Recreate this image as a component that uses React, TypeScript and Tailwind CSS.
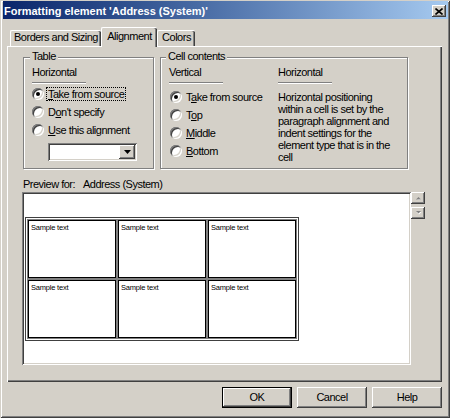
import React from "react";

const raised =
  "shadow-[inset_-1px_-1px_#404040,inset_1px_1px_#fff,inset_-2px_-2px_#808080,inset_2px_2px_#d4d0c8]";
const sunken =
  "shadow-[inset_1px_1px_#808080,inset_-1px_-1px_#fff,inset_2px_2px_#404040,inset_-2px_-2px_#d4d0c8]";

function Radio({ checked }: { checked?: boolean }) {
  return (
    <span className="relative w-[12px] h-[12px] shrink-0 rounded-full bg-white shadow-[inset_1px_1px_#808080,inset_-1px_-1px_#fff,inset_2px_2px_#404040,inset_-2px_-2px_#d4d0c8]">
      {checked && (
        <span className="absolute left-[4px] top-[4px] w-[4px] h-[4px] rounded-full bg-black" />
      )}
    </span>
  );
}

function RadioRow({
  children,
  checked,
  focus,
}: {
  children: React.ReactNode;
  checked?: boolean;
  focus?: boolean;
}) {
  return (
    <div className="flex items-center h-[18px]">
      <Radio checked={checked} />
      <span
        className={`ml-[2px] px-[1px] leading-[12px] border border-dotted whitespace-nowrap ${
          focus ? "border-black" : "border-transparent"
        }`}
      >
        {children}
      </span>
    </div>
  );
}

function Separator() {
  return <div className="w-[54px] h-[2px] mt-[3px] border-t border-t-[#808080] border-b border-b-white" />;
}

function Group({
  title,
  legendLeft,
  className,
  children,
}: {
  title: string;
  legendLeft: string;
  className: string;
  children: React.ReactNode;
}) {
  return (
    <div className={`relative border border-[#808080] shadow-[inset_1px_1px_#fff,1px_1px_#fff] ${className}`}>
      <span className={`absolute top-[-8px] px-[2px] bg-[#d4d0c8] leading-[13px] ${legendLeft}`}>{title}</span>
      {children}
    </div>
  );
}

function Tab({ label, width, active }: { label: string; width: string; active?: boolean }) {
  return (
    <div
      className={`${width} ${
        active ? "h-[20px] pt-[2px] z-10 relative" : "h-[17px]"
      } bg-[#d4d0c8] rounded-t-[2px] border-t border-l border-white shadow-[inset_-1px_0_#404040,inset_-2px_0_#808080] text-center leading-[13px] whitespace-nowrap`}
    >
      {label}
    </div>
  );
}

function Button({ label, isDefault }: { label: string; isDefault?: boolean }) {
  return (
    <div
      className={`w-[70px] h-[21px] flex items-center justify-center bg-[#d4d0c8] ${raised} ${
        isDefault ? "border border-black" : ""
      }`}
    >
      {label}
    </div>
  );
}

function ScrollBtn({ up }: { up?: boolean }) {
  return (
    <div className={`w-[14px] h-[12px] flex items-center justify-center bg-[#d4d0c8] ${raised}`}>
      <svg width="7" height="4" viewBox="0 0 7 4">
        {up ? (
          <>
            <polygon points="1,4 6,4 3.5,1.5" fill="#fff" transform="translate(0.5,0.5)" />
            <polygon points="1,3.5 6,3.5 3.5,1" fill="#808080" />
          </>
        ) : (
          <>
            <polygon points="1,0.5 6,0.5 3.5,3" fill="#fff" transform="translate(0.5,0.5)" />
            <polygon points="1,0 6,0 3.5,2.5" fill="#808080" />
          </>
        )}
      </svg>
    </div>
  );
}

function Cell() {
  return (
    <div className="bg-white border border-black shadow-[0_0_0_1px_#808080] pl-[2px] pt-[2px] text-[7.5px] leading-[9px] tracking-[-0.2px] text-black">
      Sample text
    </div>
  );
}

export default function App() {
  return (
    <div className="w-[450px] h-[418px] bg-[#d4d0c8] text-black text-[11px] tracking-[-0.5px] font-['Liberation_Sans',Arial,sans-serif] pt-[1px] pl-[3px] pr-[2px] shadow-[inset_1px_1px_#d4d0c8,inset_-1px_-1px_#404040,inset_2px_2px_#fff,inset_-2px_-2px_#808080] overflow-hidden">
      {/* title bar */}
      <div className="h-[18px] flex items-start justify-between bg-linear-to-r from-[#0a246a] to-[#a6caf0]">
        <span className="pl-[1px] pt-[4px] leading-[13px] text-white font-bold tracking-normal whitespace-nowrap">
          Formatting element 'Address (System)'
        </span>
        <div className={`mt-[4px] mr-[2px] w-[14px] h-[12px] flex items-center justify-center bg-[#d4d0c8] ${raised}`}>
          <svg width="8" height="7" viewBox="0 0 8 7">
            <path d="M0.5 0.5 L7.5 6.5 M7.5 0.5 L0.5 6.5" stroke="#000" strokeWidth="1.6" />
          </svg>
        </div>
      </div>

      <div className="ml-[4px] w-[435px]">
        {/* tabs */}
        <div className="mt-[8px] h-[20px] flex items-end pl-[3px]">
          <Tab label="Borders and Sizing" width="w-[91px]" />
          <Tab label="Alignment" width="w-[56px]" active />
          <Tab label="Colors" width="w-[38px]" />
        </div>

        {/* panel */}
        <div className="relative z-[5] -mt-px h-[336px] bg-[#d4d0c8] shadow-[inset_1px_1px_#fff,inset_-1px_-1px_#404040,inset_-2px_-2px_#808080] pt-[11px] pl-[15px]">
          <div className="flex gap-[6px] ml-[1px]">
            <Group title="Table" legendLeft="left-[6px]" className="w-[131px] h-[112px]">
              <div className="pl-[8px] pt-[8px] flex flex-col">
                <div className="leading-[13px]">Horizontal</div>
                <Separator />
                <div className="mt-[1px]">
                  <RadioRow checked focus>
                    <u>T</u>ake from source
                  </RadioRow>
                  <RadioRow>
                    D<u>o</u>n't specify
                  </RadioRow>
                  <RadioRow>
                    <u>U</u>se this alignment
                  </RadioRow>
                </div>
                <div className={`mt-[4px] ml-[16px] w-[89px] h-[18px] bg-white ${sunken} p-[2px] flex justify-end`}>
                  <div className={`w-[16px] h-full bg-[#d4d0c8] ${raised} flex items-center justify-center`}>
                    <svg width="7" height="4" viewBox="0 0 7 4">
                      <polygon points="0,0 7,0 3.5,4" fill="#000" />
                    </svg>
                  </div>
                </div>
              </div>
            </Group>

            <Group title="Cell contents" legendLeft="left-[5px]" className="w-[248px] h-[112px]">
              <div className="flex">
                <div className="w-[117px] pl-[8px] pt-[8px]">
                  <div className="leading-[13px]">Vertical</div>
                  <Separator />
                  <div className="mt-[4px] ml-[1px]">
                    <RadioRow checked>
                      T<u>a</u>ke from source
                    </RadioRow>
                    <RadioRow>
                      T<u>o</u>p
                    </RadioRow>
                    <RadioRow>
                      <u>M</u>iddle
                    </RadioRow>
                    <RadioRow>
                      <u>B</u>ottom
                    </RadioRow>
                  </div>
                </div>
                <div className="pt-[8px]">
                  <div className="leading-[13px]">Horizontal</div>
                  <Separator />
                  <p className="mt-[7px] leading-[12px] whitespace-nowrap">
                    Horizontal positioning
                    <br />
                    within a cell is set by the
                    <br />
                    paragraph alignment and
                    <br />
                    indent settings for the
                    <br />
                    element type that is in the
                    <br />
                    cell
                  </p>
                </div>
              </div>
            </Group>
          </div>

          {/* preview */}
          <div className="mt-[9px] pl-[1px] leading-[13px] flex">
            <span className="w-[60px]">Preview for:</span>
            <span>Address (System)</span>
          </div>
          <div className="mt-[1px] flex">
            <div className={`w-[389px] h-[173px] bg-white ${sunken} p-[2px]`}>
              <div className="ml-[1px] mt-[23px] w-[274px] h-[124px] border border-[#404040] p-[2px] grid grid-cols-3 grid-rows-2 gap-[2px]">
                <Cell />
                <Cell />
                <Cell />
                <Cell />
                <Cell />
                <Cell />
              </div>
            </div>
            <div className="flex flex-col gap-[3px]">
              <ScrollBtn up />
              <ScrollBtn />
            </div>
          </div>
        </div>

        {/* buttons */}
        <div className="mt-[5px] flex justify-end gap-[5px]">
          <Button label="OK" isDefault />
          <Button label="Cancel" />
          <Button label="Help" />
        </div>
      </div>
    </div>
  );
}
